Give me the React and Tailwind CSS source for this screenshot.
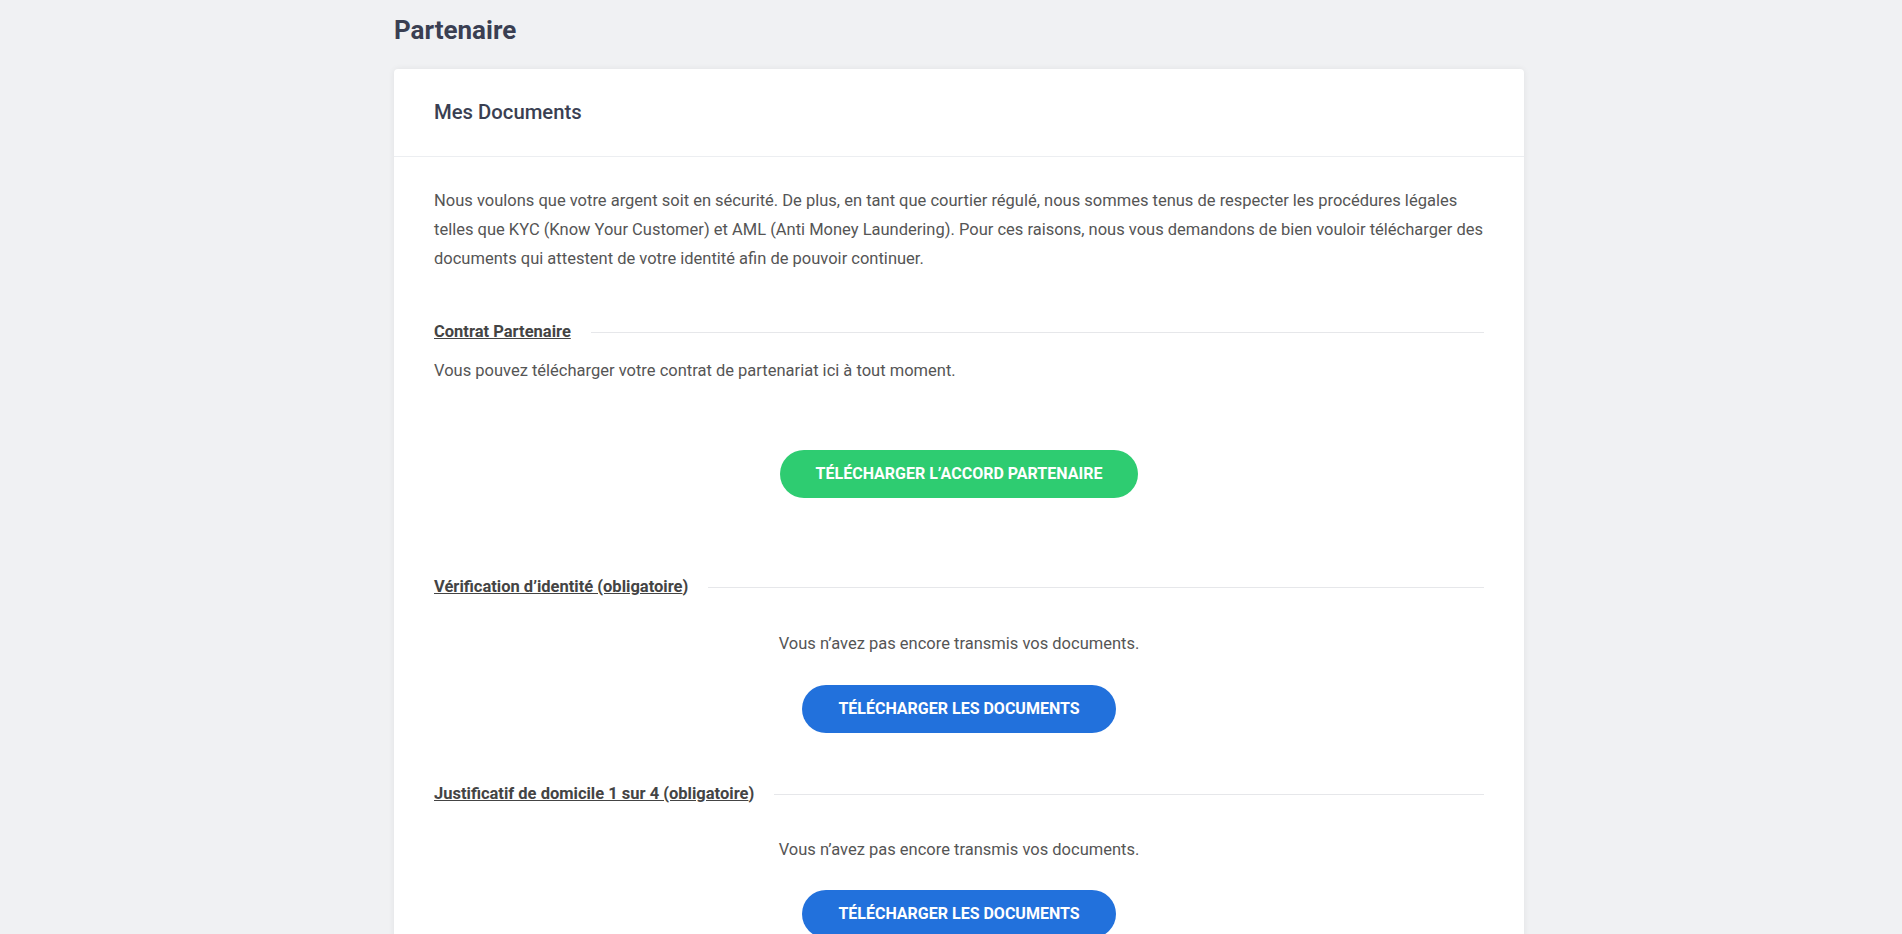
export default function App() {
  const Heading = ({ children, className }) => (
    <div className={"flex items-center h-[22px] " + className}>
      <h3 className="text-[16.5px] leading-[22px] font-bold text-[#444444] whitespace-nowrap">{children}</h3>
      <div className="ml-5 flex-1 border-t border-[#e6e7ea]"></div>
    </div>
  );
  const Btn = ({ children, color, className }) => (
    <div className={"flex justify-center " + className}>
      <button className={"h-12 px-9 rounded-full text-white text-[16px] font-bold uppercase " + color}>{children}</button>
    </div>
  );
  return (
    <div className="h-[934px] overflow-hidden bg-[#f0f1f3] font-['Roboto',sans-serif]">
      <div className="ml-[394px] w-[1130px] pt-[14px]">
        <h1 className="text-[26px] leading-[32px] font-bold text-[#3a3f52]">Partenaire</h1>
        <div className="mt-[23px] bg-white rounded-[4px] shadow-[0_0_6px_rgba(0,0,0,0.07)]">
          <div className="h-[88px] px-10 flex items-center border-b border-[#eceef1]">
            <h2 className="text-[20.3px] font-medium text-[#3a3f52]">Mes Documents</h2>
          </div>
          <div className="px-10 pt-[29px] pb-10">
            <p className="text-[16.5px] leading-[29px] text-[#555555]">
              Nous voulons que votre argent soit en sécurité. De plus, en tant que courtier régulé, nous sommes tenus de respecter les procédures légales telles que KYC (Know Your Customer) et AML (Anti Money Laundering). Pour ces raisons, nous vous demandons de bien vouloir télécharger des documents qui attestent de votre identité afin de pouvoir continuer.
            </p>
            <Heading className="mt-[48px]"><span className="underline">Contrat Partenaire</span></Heading>
            <p className="mt-[13px] text-[16.5px] leading-[29px] text-[#555555]">Vous pouvez télécharger votre contrat de partenariat ici à tout moment.</p>
            <Btn color="bg-[#2ecc71]" className="mt-[65px]">Télécharger l’accord partenaire</Btn>

            <Heading className="mt-[78px]"><span className="underline">Vérification d’identité (obligatoire</span>)</Heading>
            <p className="mt-[31px] text-center text-[16.5px] leading-[29px] text-[#555555]">Vous n’avez pas encore transmis vos documents.</p>
            <Btn color="bg-[#2271dc]" className="mt-[27px]">Télécharger les documents</Btn>

            <Heading className="mt-[50px]"><span className="underline">Justificatif de domicile 1 sur 4 (obligatoire</span>)</Heading>
            <p className="mt-[30px] text-center text-[16.5px] leading-[29px] text-[#555555]">Vous n’avez pas encore transmis vos documents.</p>
            <Btn color="bg-[#2271dc]" className="mt-[26px]">Télécharger les documents</Btn>
          </div>
        </div>
      </div>
    </div>
  );
}
